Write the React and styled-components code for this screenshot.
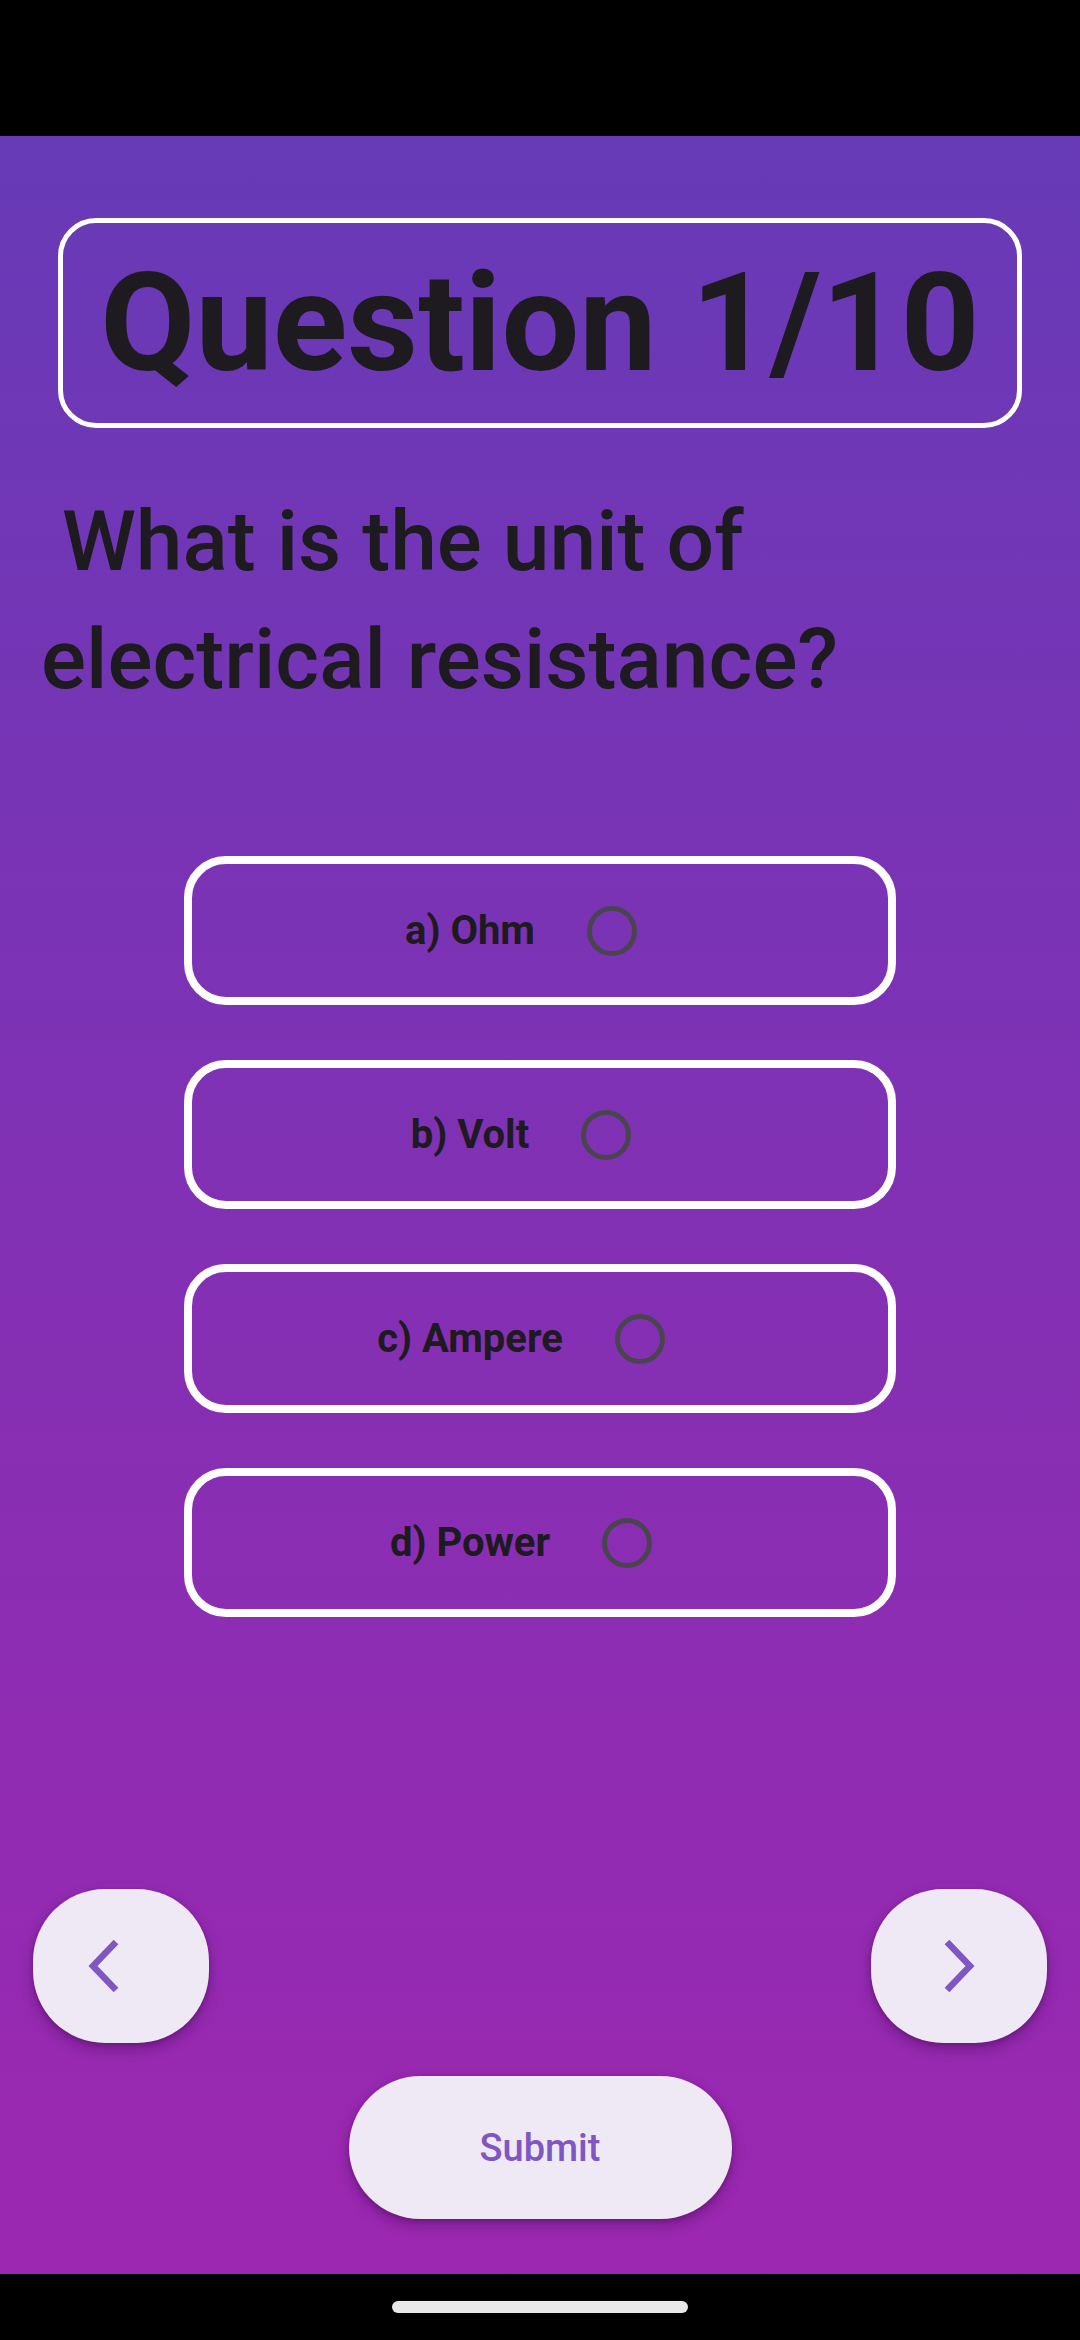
import styled, { createGlobalStyle } from "styled-components";

const GlobalStyle = createGlobalStyle`
    html, body {
        margin: 0;
        padding: 0;
        background: #000;
    }
    body {
        font-family: Roboto, "Noto Sans", sans-serif;
    }
`;

const Screen = styled.div`
    width: 1080px;
    height: 2340px;
    display: flex;
    flex-direction: column;
    background: #000;
`;

const StatusBar = styled.div`
    height: 136px;
    flex-shrink: 0;
    background: #000;
`;

const Main = styled.main`
    flex: 1;
    display: flex;
    flex-direction: column;
    background: linear-gradient(180deg, #673ab7 0%, #9c27b0 100%);
    padding: 82px 0 55px;
    box-sizing: border-box;
`;

const TitleBox = styled.div`
    margin: 0 58px;
    height: 210px;
    box-sizing: border-box;
    border: 5px solid #fff;
    border-radius: 38px;
    display: flex;
    align-items: center;
    justify-content: center;
`;

const Title = styled.h1`
    margin: 0;
    font-size: 138px;
    font-weight: 700;
    color: #1d1b20;
    white-space: nowrap;
    line-height: 1;
`;

const Question = styled.p`
    margin: 55px 45px 0 41px;
    font-size: 84px;
    font-weight: 500;
    line-height: 118px;
    color: #1d1b20;
    white-space: pre-wrap;
`;

const Options = styled.div`
    margin-top: 137px;
    display: flex;
    flex-direction: column;
    align-items: center;
    gap: 55px;
`;

const Option = styled.label`
    width: 712px;
    height: 149px;
    box-sizing: border-box;
    border: 8px solid #fff;
    border-radius: 42px;
    display: flex;
    align-items: center;
    justify-content: center;
    cursor: pointer;
`;

const OptionText = styled.span`
    font-size: 40px;
    font-weight: 700;
    color: #1d1b20;
`;

const RadioWrap = styled.span`
    height: 126px;
    padding: 0 38px 0 52px;
    display: flex;
    align-items: center;
`;

const Radio = styled.span`
    width: 50px;
    height: 50px;
    box-sizing: border-box;
    border-radius: 50%;
    border: 5px solid ${(p) => (p.checked ? "#6750a4" : "#49454f")};
`;

const Spacer = styled.div`
    flex: 1;
`;

const NavRow = styled.div`
    display: flex;
    justify-content: space-between;
    padding: 0 33px;
`;

const NavButton = styled.button`
    width: 176px;
    height: 154px;
    border: none;
    border-radius: 72px;
    background: #eee9f4;
    display: flex;
    align-items: center;
    justify-content: center;
    box-shadow: 0 6px 12px 2px rgba(60, 0, 80, 0.28), 0 2px 4px rgba(0, 0, 0, 0.2);
    cursor: pointer;
    padding: 0;
`;

const ChevronSvg = styled.svg`
    margin-right: ${(p) => (p.$shift ? "34px" : "0")};
`;

const SubmitButton = styled.button`
    align-self: center;
    margin-top: 33px;
    width: 383px;
    height: 143px;
    border: none;
    border-radius: 72px;
    background: #eee9f4;
    color: #7e57c2;
    font-family: Roboto, "Noto Sans", sans-serif;
    font-size: 38px;
    font-weight: 500;
    box-shadow: 0 6px 12px 2px rgba(60, 0, 80, 0.28), 0 2px 4px rgba(0, 0, 0, 0.2);
    cursor: pointer;
`;

const NavBar = styled.div`
    height: 66px;
    flex-shrink: 0;
    background: #000;
    display: flex;
    justify-content: center;
    padding-top: 27px;
    box-sizing: border-box;
`;

const HomePill = styled.div`
    width: 296px;
    height: 12px;
    border-radius: 6px;
    background: #e8e8e8;
`;

const Chevron = ({ dir }) => (
    <ChevronSvg width="32" height="54" viewBox="0 0 32 54" $shift={dir === "left"}>
        {dir === "left" ? (
            <polyline points="28,3 5,27 28,51" fill="none" stroke="#7e57c2" strokeWidth="6.5" />
        ) : (
            <polyline points="4,3 27,27 4,51" fill="none" stroke="#7e57c2" strokeWidth="6.5" />
        )}
    </ChevronSvg>
);

const options = ["a) Ohm", "b) Volt", "c) Ampere", "d) Power"];

const App = () => {
    return (
        <>
            <GlobalStyle />
            <Screen>
                <StatusBar />
                <Main>
                    <TitleBox>
                        <Title>Question 1/10</Title>
                    </TitleBox>
                    <Question>{" What is the unit of electrical resistance?"}</Question>
                    <Options>
                        {options.map((o) => (
                            <Option key={o}>
                                <OptionText>{o}</OptionText>
                                <RadioWrap>
                                    <Radio />
                                </RadioWrap>
                            </Option>
                        ))}
                    </Options>
                    <Spacer />
                    <NavRow>
                        <NavButton><Chevron dir="left" /></NavButton>
                        <NavButton><Chevron dir="right" /></NavButton>
                    </NavRow>
                    <SubmitButton>Submit</SubmitButton>
                </Main>
                <NavBar>
                    <HomePill />
                </NavBar>
            </Screen>
        </>
    );
};

export default App;
